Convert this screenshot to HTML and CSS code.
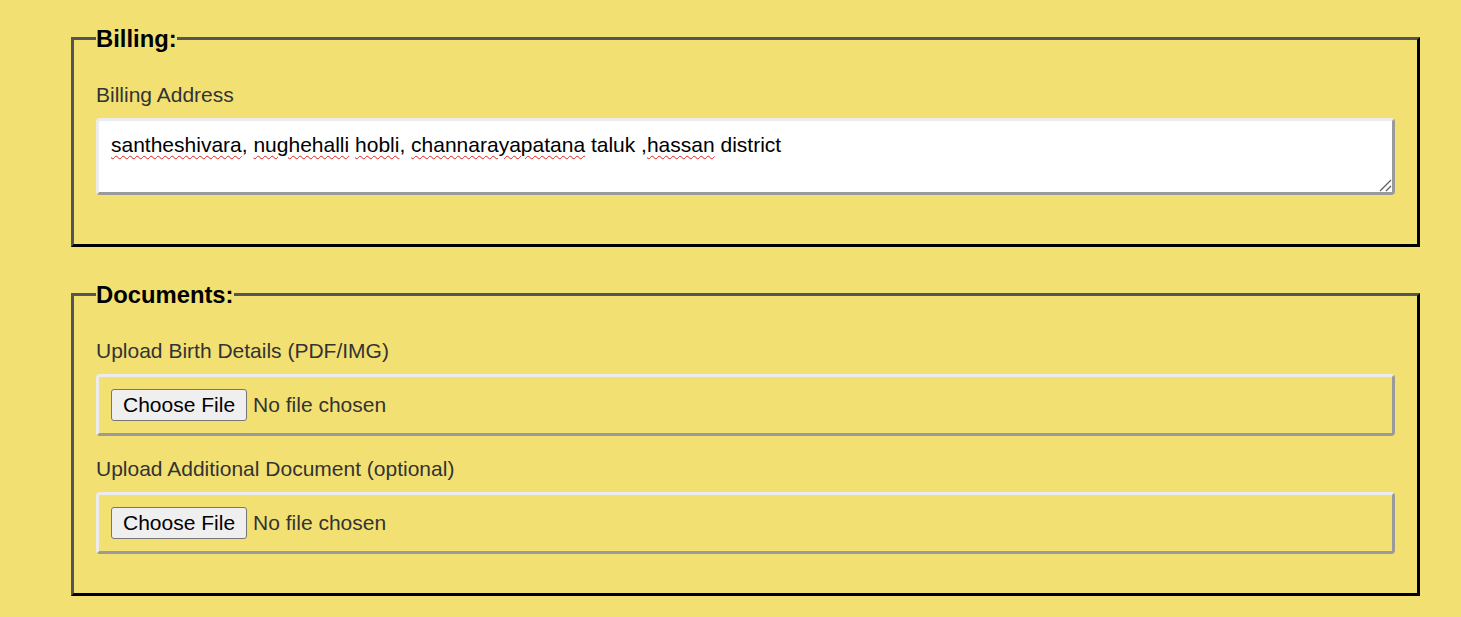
FILE: index.html
```html
<!DOCTYPE html>
<html lang="en">
<head>
<meta charset="utf-8">
<title>Billing and Documents</title>
<link rel="stylesheet" href="styles.css">
</head>
<body>
<form class="page">
  <fieldset class="section">
    <legend class="section-title">Billing:</legend>
    <div class="field field-wide">
      <label class="field-label">Billing Address</label>
      <div class="textbox" role="textbox" aria-multiline="true"><span class="misspelled">santheshivara</span>, <span class="misspelled">nughehalli</span> <span class="misspelled">hobli</span>, <span class="misspelled">channarayapatana</span> taluk ,<span class="misspelled">hassan</span> district<svg class="grip" width="14" height="14" viewBox="0 0 14 14"><path d="M2 13 L13 2 M8 13 L13 8" stroke="#5f5f5f" stroke-width="1.3" fill="none"/></svg></div>
    </div>
  </fieldset>

  <fieldset class="section">
    <legend class="section-title">Documents:</legend>
    <div class="field">
      <label class="field-label" for="birth">Upload Birth Details (PDF/IMG)</label>
      <input class="file-input" id="birth" type="file">
    </div>
    <div class="field">
      <label class="field-label" for="extra">Upload Additional Document (optional)</label>
      <input class="file-input" id="extra" type="file">
    </div>
  </fieldset>
</form>
</body>
</html>
```

FILE: styles.css
```css
html, body {
  margin: 0;
  padding: 0;
}

body {
  background: #f2e172;
  font-family: "Liberation Sans", Arial, sans-serif;
}

.page {
  padding: 25px 41px 0 71px;
  margin: 0;
}

.section {
  margin: 0 0 34px 0;
  padding: 31px 22px 18px 22px;
  border-style: solid;
  border-width: 3px;
  border-color: #555555 #000000 #000000 #555555;
  min-width: 0;
}

.section:last-child {
  margin-bottom: 0;
}

.section-title {
  padding: 0;
  font-size: 23.8px;
  line-height: 27px;
  font-weight: bold;
  color: #000;
}

.field {
  margin-bottom: 21px;
}

.field-wide {
  margin-bottom: 31px;
}

.field-label {
  display: block;
  font-size: 21px;
  line-height: 24px;
  color: #333333;
  margin-bottom: 11px;
}

.textbox {
  position: relative;
  box-sizing: border-box;
  width: 100%;
  height: 77px;
  padding: 12px;
  border: 3px solid;
  border-color: #ececec #9a9a9a #9a9a9a #ececec;
  border-radius: 4px;
  background: #ffffff;
  font-size: 21px;
  line-height: 24px;
  color: #000;
}

.misspelled {
  text-decoration: underline wavy #e0201b;
  text-decoration-thickness: 1.4px;
  text-underline-offset: 3px;
}

.grip {
  position: absolute;
  right: 0;
  bottom: 0;
}

.file-input {
  display: block;
  box-sizing: border-box;
  width: 100%;
  height: 62px;
  padding: 12px;
  margin: 0;
  border: 3px solid;
  border-color: #ececec #9a9a9a #9a9a9a #ececec;
  border-radius: 4px;
  background: transparent;
  font-family: "Liberation Sans", Arial, sans-serif;
  font-size: 21px;
  line-height: 24px;
  color: #333333;
}

.file-input::file-selector-button {
  font-family: "Liberation Sans", Arial, sans-serif;
  font-size: 21px;
  line-height: 24px;
  height: 32px;
  padding: 3px 11px;
  margin: 0 6px 0 0;
  border: 1px solid #767676;
  border-radius: 3px;
  background: #efefef;
  color: #000;
}
```
